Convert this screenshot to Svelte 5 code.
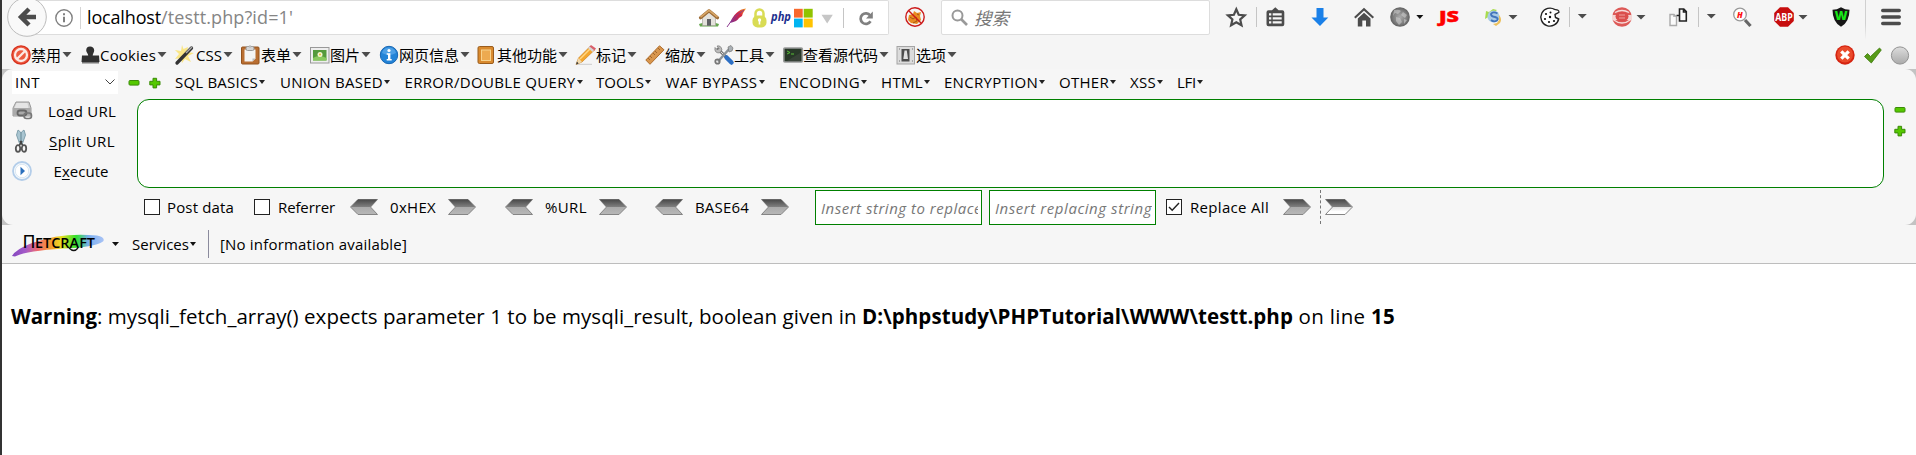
<script>
  // Spreads the letters of a label so that it fills the given width.
  function fit(node, width) {
    const run = () => {
      node.style.letterSpacing = '0px';
      const natural = node.getBoundingClientRect().width;
      const count = [...node.textContent].length;
      node.style.letterSpacing = (width - natural) / count + 'px';
    };
    run();
    requestAnimationFrame(run);
  }

  const urlIcons = [
    ['house', 27], ['feather', 25], ['lock', 20], ['php', 22], ['windows', 27], ['dropGrey', 23], ['sep', 14], ['reload', 17]
  ];
  const tools = [
    ['star', 30], ['sep', 10], ['list', 45], ['down', 43], ['home', 36], ['globe', 26], ['triSmall', 23],
    ['js', 45], ['swirl', 24], ['tri', 32], ['cookie', 29], ['sep', 8], ['triHigh', 35], ['eye', 24],
    ['tri', 32], ['pages', 30], ['sep', 8], ['triHigh', 26], ['mag', 42], ['abp', 24], ['tri', 33],
    ['shield', 34], ['tallSep', 16], ['burger', 20]
  ];
  const devMenu = [
    ['disable', '禁用', 20, 30, 70], ['stamp', 'Cookies', 19, 56, 94], ['wand', 'CSS', 21, 26, 66],
    ['clip', '表单', 20, 30, 69], ['image', '图片', 20, 30, 70], ['info', '网页信息', 19, 60, 97],
    ['book', '其他功能', 20, 60, 99], ['pencil', '标记', 20, 30, 69], ['ruler', '缩放', 20, 30, 69],
    ['wrench', '工具', 20, 30, 69], ['term', '查看源代码', 20, 75, 113], ['switch', '选项', 20, 30, 70]
  ];
  const hackMenu = [
    ['SQL BASICS', 83, 105], ['UNION BASED', 103, 124.5], ['ERROR/DOUBLE QUERY', 171, 191.5], ['TOOLS', 48, 69.5],
    ['WAF BYPASS', 92, 113.5], ['ENCODING', 81, 102], ['HTML', 42, 63], ['ENCRYPTION', 94, 115],
    ['OTHER', 50, 71], ['XSS', 26, 47], ['LFI', 19, 40]
  ];
  const codecs = [['0xHEX', 46, 155], ['%URL', 42, 150], ['BASE64', 54, 160]];
</script>

{#snippet arrow(dir, light)}
  <svg class="arrow" width="28" height="16" viewBox="0 0 28 16">
    <g transform={dir === 'left' ? 'translate(28 0) scale(-1 1)' : ''}>
      <path d="M.5.5H20L27.5 8 20 15.5H.5L7.5 8z" fill={light ? 'url(#arrowLight)' : 'url(#arrowDark)'} stroke="#858585" />
      <path d="M1 .5H20L27 8H7.5z" fill="url(#arrowTop)" />
    </g>
  </svg>
{/snippet}

{#snippet minus()}
  <svg width="12" height="12" viewBox="0 0 12 12"><rect x="1" y="3.5" width="10" height="4.6" rx="1" fill="#55c800" stroke="#3b8b08" /></svg>
{/snippet}
{#snippet plus()}
  <svg width="12" height="12" viewBox="0 0 12 12"><path d="M4 1.3h3.6v3H11v3.6H7.6v3H4v-3H.8V4.300H4z" fill="#55c800" stroke="#3b8b08" stroke-linejoin="round" /></svg>
{/snippet}

{#snippet icon(name)}
  <svg class="ic" width="20" height="20" viewBox="0 0 20 20">
    {#if name === 'house'}
      <path d="M0 16q10-4 20 0l-1 2.500H1z" fill="#66a84e" />
      <path d="M3.500 9 10 3.500 16.500 9v8.500h-13z" fill="#e4e2dc" stroke="#aaa79f" stroke-width=".7" />
      <rect x="8" y="11" width="4" height="6.700" fill="#5f6064" />
      <path d="M1.500 9.800 10 2.800l8.500 7" fill="none" stroke="#9c6b35" stroke-width="3.200" stroke-linejoin="round" stroke-linecap="round" />
      <path d="M1.500 9.200 10 2.300l8.500 6.900" fill="none" stroke="#d7a566" stroke-width="1.700" />
    {:else if name === 'feather'}
      <path d="M20 .5C13 1 7 7 4 15c5-1 8-3 9-5l3-2 1-3z" fill="url(#feather)" />
      <path d="M18 2Q8 8 1 19" stroke="#8d3a8f" fill="none" />
    {:else if name === 'lock'}
      <path d="M4.500 10V5.500a4 4 0 0 1 8 0V10" fill="none" stroke="#d9dc54" stroke-width="2.500" />
      <rect x="1.500" y="7.500" width="14" height="12" rx="5" fill="#d9dc54" />
      <circle cx="8.500" cy="12" r="1.700" fill="#fff" /><path d="M7.700 12h1.600v4.500H7.700z" fill="#fff" />
    {:else if name === 'php'}
      <text x="0" y="12.500" font-size="12" font-weight="700" font-style="italic" textLength="20" lengthAdjust="spacingAndGlyphs" fill="#1c2f8e">php</text>
    {:else if name === 'windows'}
      <path d="M1 .8h8.700v8.800H1z" fill="#f8682c" /><path d="M10.700.8h9v8.800h-9z" fill="#91c300" />
      <path d="M1 10.600h8.700v8.800H1z" fill="#00b4f1" /><path d="M10.700 10.600h9v8.800h-9z" fill="#ffc300" />
    {:else if name === 'dropGrey'}
      <path d="M1.500 6.800h11.300L7.200 15.500z" fill="#c6c6c6" />
    {:else if name === 'sep'}
      <path d="M.5 0v20" stroke="#c5c5c5" />
    {:else if name === 'reload'}
      <path d="M13.500 13.300A5.300 5.300 0 1 1 13.200 7.500" fill="none" stroke="#808080" stroke-width="2.700" />
      <path d="M15.800 3.500v7H9z" fill="#808080" />
    {:else if name === 'fox'}
      <path d="m4 8 4-1 1-3 3 2 4-1-1 4 1 4-4 4-6-1-3-3z" fill="#e88b22" />
      <path d="m5 10 3 2 3-2 1 4-4 2M12 7l2 1" stroke="#a65512" fill="none" />
      <circle cx="10" cy="10" r="9.200" fill="none" stroke="#cc1a1a" stroke-width="1.400" /><path d="m3.500 3.500 13 13" stroke="#cc1a1a" stroke-width="1.400" />
    {:else if name === 'star'}
      <path d="m10.300 2.300 2.400 5.500 6 .6-4.500 4 1.300 5.900-5.200-3.100-5.200 3.100 1.300-5.900-4.500-4 6-.6z" fill="none" stroke="#4c4c4c" stroke-width="2.200" />
    {:else if name === 'list'}
      <path d="M2.500 3.200H6L9.300.2l3.300 3h3.700q2 0 2 2v12q0 2-2 2H2.500q-2 0-2-2v-12q0-2 2-2z" fill="#4c4c4c" />
      <path d="M3 6.200h2.300v2.300H3zM6.700 6.200h9v2.300h-9zM3 10.200h2.300v2.300H3zM6.700 10.200h9v2.300h-9zM3 14.200h2.300v2.300H3zM6.700 14.200h9v2.300h-9z" fill="#f5f5f5" />
    {:else if name === 'down'}
      <path d="M5.500 1h7v9.500h4.800L9 19 .5 10.500h5z" fill="#1a80e8" />
    {:else if name === 'home'}
      <path d="M.8 10.800 10 2.200l9.300 8.600" stroke="#4c4c4c" stroke-width="2.100" fill="none" />
      <path d="M3.800 11.500 10 5.800l6.500 5.700v8H12v-6H8.300v6H3.800z" fill="#4c4c4c" />
    {:else if name === 'globe'}
      <circle cx="10" cy="10" r="9.800" fill="url(#grey)" />
      <path d="M4 3q5-1 7 1l-3 3-3-1-2 3M13 5l4 3-2 3-4-3zM6 10l4 1 2 4-3 3-3-4zM14 12l3 1-3 4z" fill="#d2d2d2" opacity=".55" />
    {:else if name === 'triSmall'}
      <path d="M.3 8h7L3.800 12z" fill="#111" />
    {:else if name === 'tri'}
      <path d="M.5 8h9L5 12.500z" fill="#4c4c4c" />
    {:else if name === 'triHigh'}
      <path d="M.8 7h9L5.300 11.500z" fill="#4c4c4c" />
    {:else if name === 'js'}
      <text x="0" y="14.800" font-size="15" font-weight="800" textLength="20" lengthAdjust="spacingAndGlyphs" fill="#f00" stroke="#f00" stroke-width=".4">JS</text>
    {:else if name === 'swirl'}
      <path d="M1 12 2 4l3 1 4-3 4 1-7 6z" fill="#a9dc4c" />
      <circle cx="9.500" cy="9.500" r="6" fill="#a8cbe6" />
      <path d="M13.500 6.500Q9 4 7 7q0 2.500 4 3 4 1 2 3.500-3 2-6-.5" stroke="#4274bb" stroke-width="1.900" fill="none" />
      <path d="M15 8q3.500 4 1 8l-4 3-3-2 4-1 2-3z" fill="#ecc05c" />
    {:else if name === 'cookie'}
      <path d="M15 2.700A9 9 0 1 0 18.700 12l-3.200-1.500-.5-3 4-2.300" fill="#fff" stroke="#222" stroke-width="1.400" />
      <path d="M15 2.700q4-.2 4 2.500l-4 2" fill="#fff" stroke="#222" stroke-width="1.200" />
      <g fill="#111"><circle cx="6" cy="7" r="1.100" /><circle cx="10.500" cy="5.500" r="1" /><circle cx="5" cy="12" r="1.100" /><circle cx="10" cy="10" r="1.200" /><circle cx="9" cy="15" r="1.100" /><circle cx="14" cy="14" r="1.100" /></g>
    {:else if name === 'eye'}
      <circle cx="10" cy="10" r="9.800" fill="#dd5a58" />
      <path d="M0 8h20v5H0z" fill="#f5d6d4" /><ellipse cx="10" cy="9.500" rx="6.500" ry="5" fill="#db4e4c" />
      <path d="M1 12.500q9 7 18 0M3 5.500q7-4 14 0" stroke="#f7dcda" stroke-width="1.300" fill="none" /><path d="M7 8h6M7 11h6" stroke="#eda09e" stroke-width="1" />
    {:else if name === 'pages'}
      <path d="M2 7.500h4l2.500 2.500v8.500H2zM6 7.500V10" fill="#fafafa" stroke="#aaa" stroke-width="1.400" />
      <path d="M11.500 2h4.300l2.500 2.500V14h-6.800zM15.500 2v3h3M8.500 8.500h3" fill="#fafafa" stroke="#222" stroke-width="1.600" />
    {:else if name === 'mag'}
      <path d="m13 13 5.500 6" stroke="#666" stroke-width="3.200" /><circle cx="8" cy="7.500" r="6.300" fill="#fff" stroke="#999" stroke-width="1.300" />
      <text x="5" y="10.500" font-size="8" font-weight="800" font-style="italic" fill="#f11">H</text>
    {:else if name === 'abp'}
      <path d="M6 .3h8L19.800 6v8L14 19.800H6L.2 14V6z" fill="#c70d0d" />
      <text x="1.300" y="13.800" font-size="10" font-weight="700" textLength="17.500" lengthAdjust="spacingAndGlyphs" fill="#fff">ABP</text>
    {:else if name === 'shield'}
      <path d="M10 .2q4 2.500 8.500 2.500 0 12.300-8.500 17-8.500-4.700-8.500-17Q6 2.700 10 .2z" fill="#161616" />
      <text x="3.700" y="13.200" font-size="11.500" font-weight="800" textLength="12.800" lengthAdjust="spacingAndGlyphs" fill="#18e818">W</text>
    {:else if name === 'burger'}
      <path d="M1.700 3.500h16.600M1.700 10h16.600M1.700 16.500h16.600" stroke="#4c4c4c" stroke-width="3.400" stroke-linecap="round" />
    {:else if name === 'disable'}
      <circle cx="10" cy="10" r="9.800" fill="#d8301c" /><circle cx="10" cy="10" r="8.500" fill="#ec5a40" />
      <circle cx="10" cy="10" r="6" fill="none" stroke="#fbeae6" stroke-width="2.300" /><path d="m6 14 8-8" stroke="#fbeae6" stroke-width="2.300" />
    {:else if name === 'stamp'}
      <path d="M9 1.500a4 4 0 0 1 4.200 4c0 2-1.500 3-1.500 5h6.300l.5 6.500H.5L1 10.500h6.200c0-2-2-3-2-5A4 4 0 0 1 9 1.500z" fill="#303030" /><path d="M1 17h17v1.500H1z" fill="#777" />
    {:else if name === 'wand'}
      <path d="m7 0 1.500 4L13 2l-1 5 7 1-6 3 3 6-6-3-3 4-1-5-6 1 4-5-4-4 6 1z" fill="#fbe26a" opacity=".8" />
      <path d="M2 18 16.500 3" stroke="#333" stroke-width="3.300" stroke-linecap="round" /><path d="m11 8 6-6" stroke="#aaa" stroke-width="1.500" />
    {:else if name === 'clip'}
      <rect x=".5" y="2" width="17.500" height="17" rx="1" fill="#b96e31" stroke="#93521d" /><path d="M3.500 4.500h11v9l-3 3h-8z" fill="#f4f4f4" />
      <path d="M14.500 13.500h-3v3z" fill="#bbb" /><rect x="5" y="1.500" width="8" height="4" rx="1.500" fill="#d5d5d5" stroke="#999" /><circle cx="9" cy="1.500" r="1.300" fill="#bbb" />
    {:else if name === 'image'}
      <rect x=".5" y="2.500" width="18.500" height="15.500" fill="#eee" stroke="#999" /><rect x="3" y="5" width="13.500" height="10.500" fill="#559a3c" />
      <path d="M3 13q6-4 13.500 0v2.500H3z" fill="#8ac95e" /><circle cx="10" cy="9.500" r="2.500" fill="#f7f3cf" /><circle cx="10" cy="9.500" r="1" fill="#e5c42a" />
    {:else if name === 'info'}
      <circle cx="9" cy="10" r="8.700" fill="#2283d7" stroke="#1766b2" /><path d="M2 8a7.200 7.200 0 0 1 14 0q-7 4-14 0z" fill="#69b3ee" opacity=".6" />
      <circle cx="9" cy="5.500" r="1.600" fill="#fff" /><path d="M6.700 8.300h3.700V14h1.300v1.500h-5V14H8V9.800H6.700z" fill="#fff" />
    {:else if name === 'book'}
      <rect x="1" y="1.500" width="15.500" height="17" rx="1.500" fill="#d98a2e" stroke="#9a5c1c" /><rect x="4.500" y="5" width="9" height="10.500" fill="#edaa50" stroke="#f8d28c" />
    {:else if name === 'pencil'}
      <path d="M1 19.300h15" stroke="#ccc" /><path d="M0 19.500 2.500 13 14 1.500 18.500 5 6 17z" fill="#f4a62e" stroke="#c47a1b" stroke-width=".6" />
      <path d="m4 14 11-11" stroke="#ffd785" stroke-width="1.500" /><path d="m13 2 2-2 5 3.500L18 6z" fill="#d9606a" /><path d="m12 3 1.500-1.500L18 5l-1.500 2z" fill="#d5d5d5" /><path d="M0 19.500 2.500 13 6 17z" fill="#f0d9ae" /><path d="m0 19.500 1-3 1.500 2z" fill="#333" />
    {:else if name === 'ruler'}
      <path d="M.8 15 14.500.8l4.500 4L5 19.300z" fill="#d9964d" stroke="#ae6d2d" /><path d="m3 13 2 2m0-4 2 2m1-5 2 2m0-4 2 2m1-5 2 2" stroke="#925a25" stroke-width=".8" />
    {:else if name === 'wrench'}
      <path d="m4 4 13 13" stroke="#777" stroke-width="3" stroke-linecap="round" /><path d="m4 4 12 12" stroke="#ddd" stroke-width="1" />
      <path d="M1 2.500 3.500 5 5 3.500 3 1q4-1 5 4L5.500 8Q0 8 1 2.500z" fill="#bbb" stroke="#777" stroke-width=".7" />
      <path d="M16 3 4 16.500" stroke="#8d9499" stroke-width="2.500" /><path d="m14 2 3-1.500L19 3l-1 3-3 1z" fill="#aab0b5" stroke="#777" stroke-width=".7" />
      <circle cx="3.500" cy="16.500" r="2.200" fill="none" stroke="#777" stroke-width="1.800" /><path d="m12.500 12.500 5 5" stroke="#2d6fc4" stroke-width="4.500" stroke-linecap="round" />
    {:else if name === 'term'}
      <rect x=".8" y="3" width="18.500" height="14" rx="1" fill="#283828" stroke="#999b9a" stroke-width="1.600" /><path d="m4 6 3 1.500L4 9m4 0h3" stroke="#58be37" fill="none" /><path d="M3 16.500 17 8v8.500z" fill="#555" opacity=".35" />
    {:else if name === 'switch'}
      <rect x="1" y="1.500" width="17.500" height="17.500" fill="#dcdcdc" stroke="#a5a5a5" /><rect x="5.500" y="4" width="8" height="12.500" fill="#4d4d4d" /><path d="M8.500 5.500h2.300l1.200 8.500H7.300z" fill="#e0e0e0" />
      <path d="M3 4h1m12 0h1M3 16h1m12 0h1" stroke="#777" />
    {:else if name === 'error'}
      <circle cx="10" cy="10" r="9.700" fill="#d52410" /><circle cx="10" cy="9.500" r="8" fill="#ea4a2b" /><path d="m6.300 6.300 7.400 7.400m0-7.400-7.400 7.400" stroke="#fff" stroke-width="3.300" />
    {:else if name === 'check'}
      <path d="m1.500 11.500 3-3 3 3L16.500 3l1.800 2-10 13z" fill="#569b17" stroke="#3c790b" stroke-width=".8" />
    {:else if name === 'disc'}
      <circle cx="10" cy="10.500" r="8.600" fill="url(#disc)" stroke="#929292" />
    {:else if name === 'disk'}
      <path d="M1 7 4 1h13l2 6v8H1z" fill="#ccc" stroke="#999" /><path d="M1 7h18v7H1z" fill="#aaa" /><path d="m4.500 2-2 5h14l-1-5z" fill="#e5e5e5" />
      <rect x="5.500" y="9.500" width="9" height="5" rx="2.500" fill="none" stroke="#666" stroke-width="1.800" /><rect x="12" y="12" width="7.500" height="5.500" rx="2.500" fill="none" stroke="#777" stroke-width="1.600" />
    {:else if name === 'scissors'}
      <g transform="translate(9 10)"><path d="M-1.500 2.500-4.500-6-3-11-.5-9 .3 1zM1.500 2.500 4.500-6 3-11 .5-9-.3 1z" fill="#a9c5d1" stroke="#6f929f" stroke-width=".8" /><path d="m-2 5 3-5m1 5-3-5" stroke="#444" stroke-width="1.500" /><ellipse cx="-3" cy="7.500" rx="2.200" ry="3.300" fill="none" stroke="#555" stroke-width="1.800" /><ellipse cx="3" cy="7.500" rx="2.200" ry="3.300" fill="none" stroke="#555" stroke-width="1.800" /></g>
    {:else if name === 'play'}
      <circle cx="10" cy="10" r="9" fill="#f4f9fd" stroke="#b3cde9" stroke-width="1.800" /><circle cx="10" cy="10" r="6.700" fill="#fff" stroke="#cdddeb" stroke-width=".7" /><path d="m8.500 5.700 4.500 4.300-4.500 4.300z" fill="#2c70bd" />
    {/if}
  </svg>
{/snippet}

<svg class="defs" width="0" height="0">
  <defs>
    <linearGradient id="feather" x1="1" y1="0" x2="0" y2="1"><stop offset="0" stop-color="#f09a20" /><stop offset=".4" stop-color="#d52540" /><stop offset="1" stop-color="#7d3092" /></linearGradient>
    <radialGradient id="grey"><stop offset="0" stop-color="#aaa" /><stop offset=".7" stop-color="#7d7d7d" /><stop offset="1" stop-color="#606060" /></radialGradient>
    <linearGradient id="disc" x1="0" y1="0" x2="0" y2="1"><stop offset="0" stop-color="#ddd" /><stop offset="1" stop-color="#aaa" /></linearGradient>
    <linearGradient id="arrowDark" x1="0" y1="0" x2="0" y2="1"><stop offset="0" stop-color="#555" /><stop offset=".5" stop-color="#aaa" /><stop offset="1" stop-color="#b8b8b8" /></linearGradient>
    <linearGradient id="arrowLight" x1="0" y1="0" x2="0" y2="1"><stop offset=".5" stop-color="#ddd" /><stop offset=".8" stop-color="#fff" /></linearGradient>
    <linearGradient id="arrowTop" x1="0" y1="0" x2="0" y2="1"><stop offset="0" stop-color="#484848" /><stop offset="1" stop-color="#808080" /></linearGradient>
    <linearGradient id="rainbow"><stop offset="0" stop-color="#8448c0" /><stop offset=".15" stop-color="#a55bc8" /><stop offset=".28" stop-color="#f06a70" /><stop offset=".42" stop-color="#f59a30" /><stop offset=".54" stop-color="#e8e020" /><stop offset=".7" stop-color="#2fe02f" /><stop offset=".83" stop-color="#78aef0" /><stop offset="1" stop-color="#a9c3f5" /></linearGradient>
  </defs>
</svg>

<div class="window">
  <div class="nav">
    <div class="back">
      <svg width="40" height="40" viewBox="0 0 40 40"><circle cx="20" cy="20" r="19.300" fill="#f9f9f9" stroke="#bcbcbc" /><path d="M22 12 14 20l8 8M14.500 20H29" fill="none" stroke="#4c4c4c" stroke-width="4.500" /></svg>
    </div>
    <div class="url">
      <svg class="site" width="18" height="18" viewBox="0 0 18 18"><circle cx="9" cy="9" r="8.200" fill="none" stroke="#808080" stroke-width="1.400" /><path d="M9 7.700v5.500M9 4.300v2" stroke="#808080" stroke-width="2" /></svg>
      <span class="bar"></span>
      <span class="address"><span use:fit={74}>localhost</span><span class="path" use:fit={132}>/testt.php?id=1'</span></span>
      <div class="icons">
        {#each urlIcons as [name, w]}<span style:width="{w}px">{@render icon(name)}</span>{/each}
      </div>
    </div>
    <div class="fox">{@render icon('fox')}</div>
    <div class="search">
      <svg width="18" height="18" viewBox="0 0 18 18"><circle cx="6.500" cy="6.500" r="5" fill="none" stroke="#999" stroke-width="2" /><path d="m10 10 6 6" stroke="#999" stroke-width="2.600" /></svg>
      <i>搜索</i>
    </div>
    <div class="icons tools">
      {#each tools as [name, w]}
        <span style:width="{w}px">{#if name === 'tallSep'}<b class="tall"></b>{:else}{@render icon(name)}{/if}</span>
      {/each}
    </div>
  </div>

  <div class="dev">
    {#each devMenu as [name, label, iw, tw, w]}
      <div class="item" style:width="{w}px">
        <span class="slot" style:width="{iw}px">{@render icon(name)}</span><span use:fit={tw}>{label}</span>
        <svg class="caret" width="10" height="6" viewBox="0 0 10 6"><path d="M.5 0h9L5 5.300z" fill="#4c4c4c" /></svg>
      </div>
    {/each}
    <div class="status">{@render icon('error')}{@render icon('check')}{@render icon('disc')}</div>
  </div>

  <div class="panelwrap"><div class="panel">
    <div class="menu">
      <div class="select"><span use:fit={25}>INT</span><svg width="10" height="6" viewBox="0 0 10 6"><path d="m.5.5 4.500 4.500L9.500.5" fill="none" stroke="#444" /></svg></div>
      <span class="m">{@render minus()}</span><span class="p">{@render plus()}</span>
      {#each hackMenu as [label, tw, w]}
        <div class="item" style:width="{w}px"><span use:fit={tw}>{label}</span><svg class="mini" width="6" height="4" viewBox="0 0 6 4"><path d="M0 0h6L3 4z" fill="#222" /></svg></div>
      {/each}
    </div>
    <div class="editor">
      <div class="actions">
        <div>{@render icon('disk')}<span class="lbl"><span use:fit={68}>Lo<u>a</u>d URL</span></span></div>
        <div>{@render icon('scissors')}<span class="lbl"><span use:fit={66}><u>S</u>plit URL</span></span></div>
        <div>{@render icon('play')}<span class="lbl last"><span use:fit={55}>E<u>x</u>ecute</span></span></div>
      </div>
      <div class="area"></div>
      <div class="resize">{@render minus()}{@render plus()}</div>
    </div>
    <div class="options">
      <div class="check"></div><div class="opt post"><span use:fit={67}>Post data</span></div>
      <div class="check"></div><div class="opt ref"><span use:fit={57}>Referrer</span></div>
      {#each codecs as [label, tw, w]}
        <div class="codec" style:width="{w}px">{@render arrow('left')}<span use:fit={tw}>{label}</span>{@render arrow('right')}</div>
      {/each}
      <div class="field"><div class="clip"><span use:fit={161}>Insert string to replace</span></div></div>
      <div class="field"><div class="clip"><span use:fit={157}>Insert replacing string</span></div></div>
      <div class="check on"><svg width="14" height="14" viewBox="0 0 14 14"><path d="m2 7 3.200 3.300L12 3" fill="none" stroke="#222" stroke-width="1.400" /></svg></div>
      <div class="opt all"><span use:fit={79}>Replace All</span></div>
      {@render arrow('right')}
      <span class="dash"></span>
      {@render arrow('right', true)}
    </div>
  </div></div>

  <div class="netcraft">
    <svg class="logo" width="94" height="24" viewBox="0 0 94 24">
      <path d="M0 22Q4 15 20 9 50-2 85 1.500q9 2 6 6-9 6-40 7Q14 17 3 22.500z" fill="url(#rainbow)" />
      <text class="pi" x="10.500" y="14" font-size="18" textLength="13" lengthAdjust="spacingAndGlyphs">Π</text>
      <text x="23" y="14" font-size="14" font-weight="600" textLength="60" lengthAdjust="spacingAndGlyphs">ETCRAFT</text>
      <path d="M57 14q5 5 9 0" fill="none" stroke="#111" stroke-width="1.300" />
    </svg>
    <svg class="mini first" width="7" height="4" viewBox="0 0 7 4"><path d="M0 0h7L3.500 4z" fill="#111" /></svg>
    <span use:fit={57}>Services</span><svg class="mini" width="6" height="4" viewBox="0 0 6 4"><path d="M0 0h6L3 4z" fill="#111" /></svg>
    <span class="rule"></span>
    <span use:fit={187}>[No information available]</span>
  </div>

  <div class="page">
    <b use:fit={86}>Warning</b><span use:fit={765}>: mysqli_fetch_array() expects parameter 1 to be mysqli_result, boolean given in&nbsp;</span><b use:fit={431}>D:\phpstudy\PHPTutorial\WWW\testt.php</b><span use:fit={78}>&nbsp;on line&nbsp;</span><b use:fit={24}>15</b>
  </div>
</div>

<style>
  :global(body) { margin: 0; background: #fff; overflow: hidden; }
  .defs { position: absolute; }
  .window {
    box-sizing: border-box; width: 1916px; height: 455px; border-left: 2px solid #333; overflow: hidden;
    background: #fff; color: #000; font: 15px/20px "Open Sans", "Noto Sans CJK SC", sans-serif;
    display: flex; flex-direction: column;
  }
  svg { display: block; flex: none; overflow: visible; }
  span { white-space: pre; }
  .nav { height: 40px; flex: none; background: #f5f5f5; display: flex; align-items: flex-start; }
  .back { width: 40px; height: 40px; margin: -3px -19px 0 5px; z-index: 1; }
  .url { box-sizing: border-box; width: 861px; height: 35px; border: 1px solid #ddd; border-left: 0; border-radius: 0 2px 2px 0; background: #fff; display: flex; align-items: center; padding-left: 27px; }
  .bar { width: 1px; height: 22px; background: #d5d5d5; margin: 0 6px 0 7px; }
  .address { display: flex; width: 612px; font-size: 18px; line-height: 24px; padding-bottom: 1px; }
  .path { color: #858585; }
  .icons { display: flex; align-items: center; }
  .icons span { flex: none; height: 20px; }
  .fox { padding: 7px 16px 0 16px; }
  .search { box-sizing: border-box; width: 269px; height: 35px; border: 1px solid #ddd; border-radius: 2px; background: #fff; display: flex; align-items: center; padding-left: 9px; gap: 5px; font-size: 17.500px; color: #777; }
  .tools { margin-left: 16px; height: 34px; }
  .tall { display: block; width: 1px; height: 40px; margin-top: -7px; background: linear-gradient(#d0d0d0 60%, #f5f5f5); }
  .dev { height: 29px; flex: none; background: #f5f5f5; display: flex; align-items: center; padding: 0 6px 0 9px; box-sizing: border-box; }
  .item { display: flex; align-items: center; flex: none; }
  .slot { flex: none; }
  .caret { margin: 0 0 0 1px; }
  .status { margin-left: auto; display: flex; gap: 7.500px; }
  .panelwrap { background: #c3c3c3; flex: none; }
  .panel { height: 156px; border-radius: 11px; background: #f6f6f6; display: flex; flex-direction: column; }
  .menu { height: 30px; display: flex; align-items: center; padding-left: 10px; box-sizing: border-box; }
  .menu .item { margin-top: -4px; }
  .select { box-sizing: border-box; width: 106px; height: 23px; background: #fff; display: flex; align-items: center; justify-content: space-between; padding: 0 3px 1px; margin-top: -3px; }
  .m { width: 12px; margin: -3px 9px 0 10px; }
  .p { width: 12px; margin: -3px 14px 0 0; }
  .mini { margin-left: 1px; }
  .editor { display: flex; height: 89px; }
  .actions { width: 125px; padding-left: 10px; box-sizing: border-box; margin-right: 10px; }
  .actions div { display: flex; align-items: center; height: 31px; margin-top: -1px; gap: 4px; }
  .actions div:first-child { margin-top: -4px; }
  .lbl { width: 96px; display: flex; justify-content: center; margin-left: 1px; }
  .last { margin-left: -1px; }
  u { text-underline-offset: 2px; text-decoration-thickness: 1px; }
  .area { box-sizing: border-box; width: 1747px; border: 1px solid #008000; border-radius: 12px; background: #fff; }
  .resize { padding: 5px 0 0 10px; display: flex; flex-direction: column; gap: 9px; }
  .options { display: flex; align-items: center; height: 37px; padding: 1px 0 0 142px; box-sizing: border-box; }
  .check { box-sizing: border-box; width: 16px; height: 16px; border: 1px solid #222; background: #fff; flex: none; }
  .opt { box-sizing: border-box; padding-left: 7px; flex: none; }
  .post { width: 94px; }
  .ref { width: 80px; padding-left: 8px; }
  .codec { flex: none; display: flex; align-items: center; gap: 12px; }
  .field { box-sizing: border-box; flex: none; width: 167px; height: 35px; border: 1px solid #008000; background: #fff; padding: 7px 3px 0 5px; font-style: italic; color: #777; margin-right: 7px; }
  .clip { overflow: hidden; }
  .field + .check { margin-left: 3px; }
  .all { width: 101px; padding-left: 8px; }
  .dash { width: 0; height: 34px; border-left: 1px dashed #777; margin: 0 4px 0 9px; }
  .netcraft { box-sizing: border-box; height: 39px; flex: none; background: #f6f6f6; border-bottom: 1px solid #bdbdbd; display: flex; align-items: center; padding-left: 10px; }
  .logo { margin-top: 3px; font-family: "Open Sans", sans-serif; }
  .pi { font-family: "DejaVu Sans", sans-serif; }
  .first { margin: 0 13px 0 6px; }
  .rule { width: 1px; height: 28px; background: #8b8b9d; margin: 0 11px 0 12px; }
  .page { padding: 38px 0 0 9px; display: flex; font-size: 20.500px; line-height: 28px; }
</style>
